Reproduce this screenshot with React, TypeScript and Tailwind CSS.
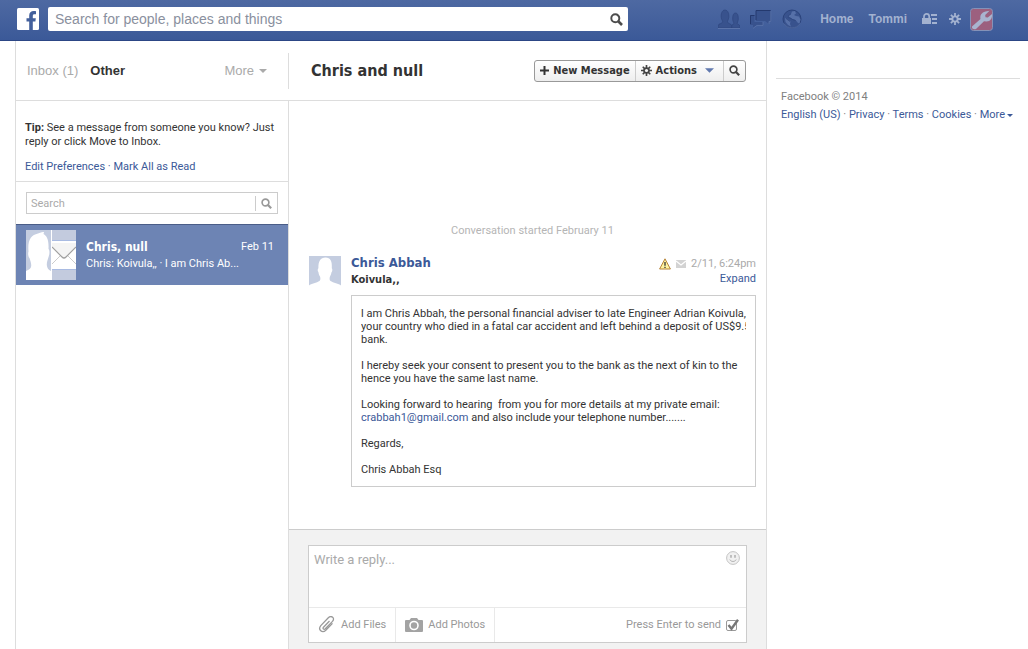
import type { ReactNode } from "react";

const sans = "font-['Liberation_Sans',Arial,sans-serif]";
const body = "font-[Roboto,Tahoma,sans-serif]";
const heading = "font-['DejaVu_Sans_Condensed',Tahoma,sans-serif] font-bold";

const footerLinks = ["English (US)", "Privacy", "Terms", "Cookies"];

function SearchIcon({ className }: { className?: string }) {
  return (
    <svg viewBox="0 0 12 12" className={className} fill="none" stroke="currentColor" aria-hidden="true">
      <circle cx="4.9" cy="4.9" r="3.7" strokeWidth="1.8" />
      <path d="M7.6 7.6l3.5 3.5" strokeWidth="2.4" />
    </svg>
  );
}

function GearIcon({ className, hole }: { className?: string; hole: string }) {
  return (
    <svg viewBox="0 0 12 12" className={className} aria-hidden="true">
      <path stroke="currentColor" strokeWidth="1.8" d="M6 0v12M0 6h12M1.9 1.9l8.2 8.2M10.1 1.9l-8.2 8.2" />
      <circle cx="6" cy="6" r="3.6" fill="currentColor" />
      <circle cx="6" cy="6" r="1.7" fill={hole} />
    </svg>
  );
}

function Caret({ className }: { className?: string }) {
  return (
    <svg viewBox="0 0 10 5" className={className} fill="currentColor" aria-hidden="true">
      <path d="M0 0h10L5 5z" />
    </svg>
  );
}

function Person({ className }: { className?: string }) {
  return (
    <svg viewBox="0 0 32 32" className={className} aria-hidden="true">
      <path fill="#c4cde0" d="M0 0h32v32H0z" />
      <path
        fill="#fff"
        d="M0 32v-2.500c2-2 8-2.800 10.500-4.500 1.200-1 1-3 .5-4.500-1-1.500-1.300-2.500-1.600-4.500-.8-.6-1-3 0-3.800C9.200 5 11.500 1.500 16.500 1.500c5 0 6.800 3.500 6.300 10.700.9.700.6 3.200-.3 4-.3 1.800-.9 3-1.700 4.800-.3 1.500-.4 3.200.7 4C24 26.700 30 27.500 32 29.500V32z"
      />
    </svg>
  );
}

function GroupThumb() {
  return (
    <span className="flex size-[50px] shrink-0 gap-px bg-white">
      <svg viewBox="0 0 25 50" className="h-[50px] w-[25px]" aria-hidden="true">
        <path fill="#c4cde0" d="M0 0h25v50H0z" />
        <path
          fill="#fff"
          d="M0 50V41c3-1.200 5-2.500 5.200-5 .2-3-.8-5-1.700-8-1-.6-1.800-4-1-6.500C1.500 10 5 5 12 3.500 15 2 17 2 18 2l-.5 2c3.500 2 5.500 6 5 15 1.300 1 1.200 5 .2 7.500-.8 3-2 5-1.900 8.500.3 3 1.500 5 4.200 6v9z"
        />
      </svg>
      <svg viewBox="0 0 24 50" className="h-[50px] w-6" aria-hidden="true">
        <path fill="#c3cbde" d="M0 0h24v50H0z" />
        <path fill="#a9bbe2" d="M0 10h24v1H0zM0 39h24v1H0z" />
        <path fill="#fff" d="M0 11h24v28H0z" />
        <path fill="#f4f4f4" d="M0 16l12 12 12-12v-3H0z" />
        <path fill="none" stroke="#ccc" d="M0 34l9-9M24 34l-9-9" />
        <path fill="none" stroke="#a0a0a0" strokeWidth="1.200" d="M0 17l10 10q2 2 4 0l10-10" />
      </svg>
    </span>
  );
}

function FriendsIcon() {
  return (
    <svg viewBox="0 0 22 20" className="h-5 w-[22px]" aria-hidden="true">
      <g fill="#38528d" stroke="#2b437b" strokeWidth=".6">
        <path d="M13 19v-2c.2-1.200 2.400-1.500 2.900-2.300.3-.8-.9-2-1.100-3.700-.4-3 .2-7 2.700-7s3.100 4 2.700 7c-.2 1.500-1 2.600-1 3.500.3.900 2.600 1.200 2.800 2.500v2z" />
        <path d="M0 19v-2.500c.4-1.800 4.500-2 4.700-3.500.1-1-1.200-2.300-1.500-4.500C2.700 5 4 1 7 1s4.300 4 3.800 7.500c-.3 2.200-1.500 3.500-1.400 4.500.2 1.500 4 1.700 4.300 3.500V19z" />
      </g>
      <path d="M0 19.500h22" stroke="#5b74aa" />
    </svg>
  );
}

function ChatIcon() {
  return (
    <svg viewBox="0 0 22 20" className="h-5 w-[22px]" aria-hidden="true">
      <path fill="#38528d" d="M6 1h15v11h-2v3l-4-3H6z" />
      <path fill="#38528d" d="M0 6h4.500v7H13v3H7l-4 3v-3H0z" />
      <path fill="none" stroke="#24396e" d="M6 11V1.500h14.500M.500 15V6.500h4" />
      <path fill="none" stroke="#5b74aa" strokeWidth=".8" d="M20.800 2v10.400H19V15M13 13v3.400H7l-4 3" />
    </svg>
  );
}

function GlobeIcon() {
  return (
    <svg viewBox="0 0 20 20" className="size-5" aria-hidden="true">
      <circle cx="10" cy="10" r="9" fill="#38528d" stroke="#2b437b" />
      <path fill="#5670a8" d="M10 2.500l3-.5 1 2.500-2 1.500 2 1 3 .5 1.500 3-1 4-1.500-.5-2.500-3-3-1-3-2L6 9l1-3 2-1zM3 9l3 1.500 2.500 2L8 15l1 2.500-3-1.500-2.500-3z" />
      <path fill="none" stroke="#2b437b" strokeWidth=".7" d="M9 5L7 6 6 8.500l2 .5 2.500 1.500 3 1M4 9.500l2 1.500 2 1.500" />
      <path fill="none" stroke="#5b74aa" strokeWidth=".8" d="M2 14.500a9.400 9.400 0 0 0 16 0" />
    </svg>
  );
}

function LockIcon() {
  return (
    <svg viewBox="0 0 15 12" className="h-3 w-[15px]" aria-hidden="true">
      <path fill="none" stroke="currentColor" strokeWidth="1.700" d="M2 6V3.500a2.600 2.600 0 0 1 5.200 0V6" />
      <path fill="currentColor" d="M0 5h9v6H0zM9 1h6v2H9zM10 5h5v2h-5zM10 9h5v2h-5z" />
    </svg>
  );
}

function WrenchIcon() {
  return (
    <svg viewBox="0 0 23 23" className="size-[23px]" aria-hidden="true">
      <rect x=".5" y=".5" width="22" height="22" rx="3" fill="#9c607f" stroke="#8492b8" />
      <path
        fill="#a9b4d0"
        d="M2 18.500l8.500-7.500c-.8-3.500 1-6.500 5-7.500l4-.7-4.300 4.200.3 2.200 2.300.3 4.200-3.500c.5 4-1.500 7.500-5.500 7.500l-2.500-.2-8 7.700c-2.500 1-4.500-.5-4-2.500z"
      />
    </svg>
  );
}

function TopBar() {
  return (
    <header
      className={`flex h-[41px] items-center border-b border-[#2c4685] bg-linear-to-b from-[#4e69a2] to-[#3b5998] pb-0.5 pl-[17px] pr-[35px] ${sans}`}
    >
      <a href="#" aria-label="Facebook" className="mr-[9px]">
        <svg viewBox="0 0 22 22" className="size-[22px]" aria-hidden="true">
          <rect width="22" height="22" rx="1.500" fill="#fff" />
          <path
            fill="#43609c"
            d="M12.200 22v-8.500H9.500v-3.300h2.700V7.500c0-3 1.800-4.500 4.500-4.500 1 0 1.900.1 2.300.2v3.100h-1.500c-1.300 0-1.700.6-1.700 1.600v2.300h3l-.4 3.300h-2.600V22z"
          />
        </svg>
      </a>
      <form className="flex h-6 min-w-0 max-w-[580px] flex-1 items-center rounded-[2px] bg-white">
        <input
          type="text"
          aria-label="Search for people, places and things"
          placeholder="Search for people, places and things"
          className="min-w-0 flex-1 pl-[7px] text-sm text-gray-800 outline-none placeholder:text-[#8a909e]"
        />
        <button type="button" aria-label="Search" className="px-[5px] text-[#4c4c4c]">
          <SearchIcon className="size-[13px]" />
        </button>
      </form>
      <nav className="ml-auto flex items-center text-xs font-bold text-[#a3b2d0]">
        <button type="button" aria-label="Friend requests" className="mr-2.5">
          <FriendsIcon />
        </button>
        <button type="button" aria-label="Messages" className="mr-2.5">
          <ChatIcon />
        </button>
        <button type="button" aria-label="Notifications" className="mr-[18px]">
          <GlobeIcon />
        </button>
        <a href="#" className="mr-[15px]">Home</a>
        <a href="#" className="mr-[15px]">Tommi</a>
        <button type="button" aria-label="Privacy shortcuts" className="mr-3">
          <LockIcon />
        </button>
        <button type="button" aria-label="Settings" className="mr-[9px]">
          <GearIcon className="size-3" hole="#435f9d" />
        </button>
        <button type="button" aria-label="Tools">
          <WrenchIcon />
        </button>
      </nav>
    </header>
  );
}

function Sidebar() {
  return (
    <aside className="flex w-[274px] shrink-0 flex-col border-l border-[#ddd]">
      <div className="flex h-[60px] items-center border-b border-[#ddd]">
        <div className={`flex h-9 flex-1 items-center border-r border-[#ddd] pl-[11px] pr-[21px] text-[13px] text-[#aaa] ${sans}`}>
          <a href="#" className="mr-3">Inbox (1)</a>
          <a href="#" className="font-bold text-[#333]">Other</a>
          <button type="button" className="ml-auto flex items-center gap-[5px]">
            More
            <Caret className="h-1 w-2" />
          </button>
        </div>
      </div>
      <div className="flex flex-1 flex-col border-r border-[#ddd]">
        <div className="border-b border-[#ddd] px-[9px] pb-[7px] pt-5 leading-[14px]">
          <p>
            <b>Tip:</b> See a message from someone you know? Just reply or click Move to Inbox.
          </p>
          <p className="mt-[11px] text-[#3b5998]">
            <a href="#">Edit Preferences</a> · <a href="#">Mark All as Read</a>
          </p>
        </div>
        <div className="px-2.5 py-2.5">
          <form className="flex h-[22px] items-center border border-[#ccc]">
            <input
              type="text"
              aria-label="Search messages"
              placeholder="Search"
              className="min-w-0 flex-1 pl-1 pt-px outline-none placeholder:text-[#aaa]"
            />
            <button type="button" aria-label="Search" className="border-l border-[#ccc] px-[5px] py-0.5 text-[#999]">
              <SearchIcon className="size-[11px]" />
            </button>
          </form>
        </div>
        <a href="#" className="flex border-t border-[#4a5d87] bg-[#6d84b4] py-[5px] pl-2.5 pr-3.5 text-white">
          <GroupThumb />
          <span className="min-w-0 flex-1 pl-2.5 pt-2">
            <span className="flex items-center justify-between">
              <span className={`text-xs leading-[18px] ${heading}`}>Chris, null</span>
              <span>Feb 11</span>
            </span>
            <span className="block leading-4">Chris: Koivula,, · l am Chris Ab...</span>
          </span>
        </a>
      </div>
    </aside>
  );
}

function ToolButton({ children, label }: { children: ReactNode; label?: string }) {
  return (
    <button type="button" aria-label={label} className={`flex items-center gap-1 px-[5px] text-[#333] ${heading}`}>
      {children}
    </button>
  );
}

function Message() {
  return (
    <article className="flex gap-2.5">
      <Person className="size-8 shrink-0" />
      <div className="min-w-0 flex-1">
        <div className="flex justify-between">
          <div>
            <a href="#" className={`block text-[13px] leading-[14px] text-[#3b5998] ${heading}`}>Chris Abbah</a>
            <p className={`leading-5 ${heading}`}>Koivula,,</p>
          </div>
          <div className="text-right">
            <div className="flex items-center gap-[5px] leading-4 text-[#aaa]">
              <svg viewBox="0 0 12 12" className="size-3" aria-hidden="true">
                <path fill="#fff3a0" stroke="#b58237" strokeLinejoin="round" d="M6 .800L11.400 11H.600z" />
                <path stroke="#333" strokeWidth="1.300" d="M6 4v3.800M6 8.800v1.200" />
              </svg>
              <svg viewBox="0 0 10 8" className="h-2 w-2.5" aria-hidden="true">
                <path fill="#d3d3d3" d="M0 0h10v8H0z" />
                <path fill="none" stroke="#fff" strokeWidth="1.200" d="M0 1l5 4 5-4" />
              </svg>
              <span>2/11, 6:24pm</span>
            </div>
            <a href="#" className="block leading-[14px] text-[#3b5998]">Expand</a>
          </div>
        </div>
        <div className="mt-[5px] border border-[#ccc] px-[9px] pb-2.5 pt-[11px] leading-[13px]">
          <div className="space-y-[13px] overflow-hidden whitespace-pre">
            <p>
              l am Chris Abbah, the personal financial adviser to late Engineer Adrian Koivula,
              <br />
              your country who died in a fatal car accident and left behind a deposit of US$9.5
              <br />
              bank.
            </p>
            <p>
              I hereby seek your consent to present you to the bank as the next of kin to the
              <br />
              hence you have the same last name.
            </p>
            <p>
              {"Looking forward to hearing  from you for more details at my private email:"}
              <br />
              <a href="#" className="text-[#3b5998]">crabbah1@gmail.com</a> and also include your telephone number.......
            </p>
            <p>Regards,</p>
            <p>Chris Abbah Esq</p>
          </div>
        </div>
      </div>
    </article>
  );
}

function Composer() {
  return (
    <div className="border-t border-[#ccc] bg-[#f2f2f2] px-[19px] pb-1.5 pt-[15px]">
      <form className="border border-[#ccc] bg-white text-[#999]">
        <div className="flex items-start border-b border-[#e9e9e9] pr-1.5">
          <textarea
            aria-label="Write a reply"
            placeholder="Write a reply..."
            className="block h-[61px] min-w-0 flex-1 resize-none px-[5px] py-[5px] text-[13px] leading-[18px] outline-none placeholder:text-[#aaa]"
          />
          <button type="button" aria-label="Choose an emoticon" className="mt-[5px]">
            <svg viewBox="0 0 14 14" className="size-3.5" aria-hidden="true">
              <circle cx="7" cy="7" r="6.400" fill="#f1f1f1" stroke="#c4c4c4" />
              <path stroke="#aaa" strokeWidth="1.400" d="M5 4v2.800M9 4v2.800" />
              <path fill="none" stroke="#b5b5b5" d="M3.800 8.500c1 2.600 5.400 2.600 6.400 0" />
            </svg>
          </button>
        </div>
        <div className="flex h-[34px] items-stretch">
          <button type="button" className="flex items-center gap-[5px] border-r border-[#e9e9e9] px-[9px]">
            <svg viewBox="0 0 18 18" className="size-[18px]" fill="none" stroke="currentColor" strokeWidth="1.300" aria-hidden="true">
              <path d="M11.500 5l-6 6.200c-1.200 1.600.5 2.800 1.800 1.600l7.200-7.400c3-3.600-1.300-6.400-4.200-3.700L2.800 9.600c-3.200 4 1.400 8 5 4.600l6.700-6.800" />
            </svg>
            Add Files
          </button>
          <button type="button" className="flex items-center gap-[5px] border-r border-[#e9e9e9] px-[9px]">
            <svg viewBox="0 0 18 14" className="h-3.5 w-[18px]" aria-hidden="true">
              <path fill="#a3a3a3" d="M1 2h3.500L6 0h6l1.500 2H17q1 0 1 1v10q0 1-1 1H1q-1 0-1-1V3q0-1 1-1z" />
              <circle cx="9" cy="7.500" r="4" fill="#a3a3a3" stroke="#fff" strokeWidth="1.600" />
            </svg>
            Add Photos
          </button>
          <label className="ml-auto flex items-center gap-[5px] pr-[7px]">
            Press Enter to send
            <span className="relative block size-[13px]">
              <input
                type="checkbox"
                defaultChecked
                className="peer mt-px block size-[11px] appearance-none rounded-[2px] border border-[#999]"
              />
              <svg
                viewBox="0 0 13 13"
                className="pointer-events-none absolute inset-0 hidden size-[13px] peer-checked:block"
                aria-hidden="true"
              >
                <path fill="none" stroke="#777" strokeWidth="2.400" d="M2.500 6l3 3.800L12 .800" />
              </svg>
            </span>
          </label>
        </div>
      </form>
    </div>
  );
}

function Thread() {
  return (
    <main className="flex min-w-0 flex-1 flex-col border-r border-[#ddd]">
      <div className="flex h-[60px] items-center justify-between border-b border-[#ddd] pl-[22px] pr-5">
        <h1 className={`text-base ${heading}`}>Chris and null</h1>
        <div className="flex h-[22px] divide-x divide-[#ccc] rounded-[3px] border border-[#999] bg-linear-to-b from-white to-[#eee]">
          <ToolButton>
            <svg viewBox="0 0 9 9" className="size-[9px]" aria-hidden="true">
              <path stroke="currentColor" strokeWidth="2" d="M4.500 0v9M0 4.500h9" />
            </svg>
            New Message
          </ToolButton>
          <ToolButton>
            <GearIcon className="size-[11px] text-[#444]" hole="#f6f6f6" />
            Actions
            <Caret className="mx-1 h-[5px] w-[9px] text-[#6179ae]" />
          </ToolButton>
          <ToolButton label="Search conversation">
            <SearchIcon className="size-[11px] text-[#444]" />
          </ToolButton>
        </div>
      </div>
      <div className="flex flex-1 flex-col justify-end pb-[42px] pl-5 pr-2.5">
        <p className="mb-[18px] text-center text-[#b5b5b5]">Conversation started February 11</p>
        <Message />
      </div>
      <Composer />
    </main>
  );
}

function RightColumn() {
  return (
    <aside className="w-[261px] shrink-0 pl-[9px] pr-2">
      <footer className="mt-[37px] border-t border-[#ddd] pl-[5px] pt-[9px] leading-[18px] text-[#808080]">
        <p>Facebook © 2014</p>
        <p className="whitespace-nowrap">
          {footerLinks.map((link) => (
            <span key={link}>
              <a href="#" className="text-[#3b5998]">{link}</a> ·{" "}
            </span>
          ))}
          <a href="#" className="inline-flex items-center gap-0.5 text-[#3b5998]">
            More
            <Caret className="h-[3px] w-1.5" />
          </a>
        </p>
      </footer>
    </aside>
  );
}

export default function App() {
  return (
    <div className={`flex min-h-screen flex-col bg-white text-[11px] leading-[14px] text-[#333] ${body}`}>
      <TopBar />
      <div className="flex flex-1 pl-[15px]">
        <Sidebar />
        <Thread />
        <RightColumn />
      </div>
    </div>
  );
}
